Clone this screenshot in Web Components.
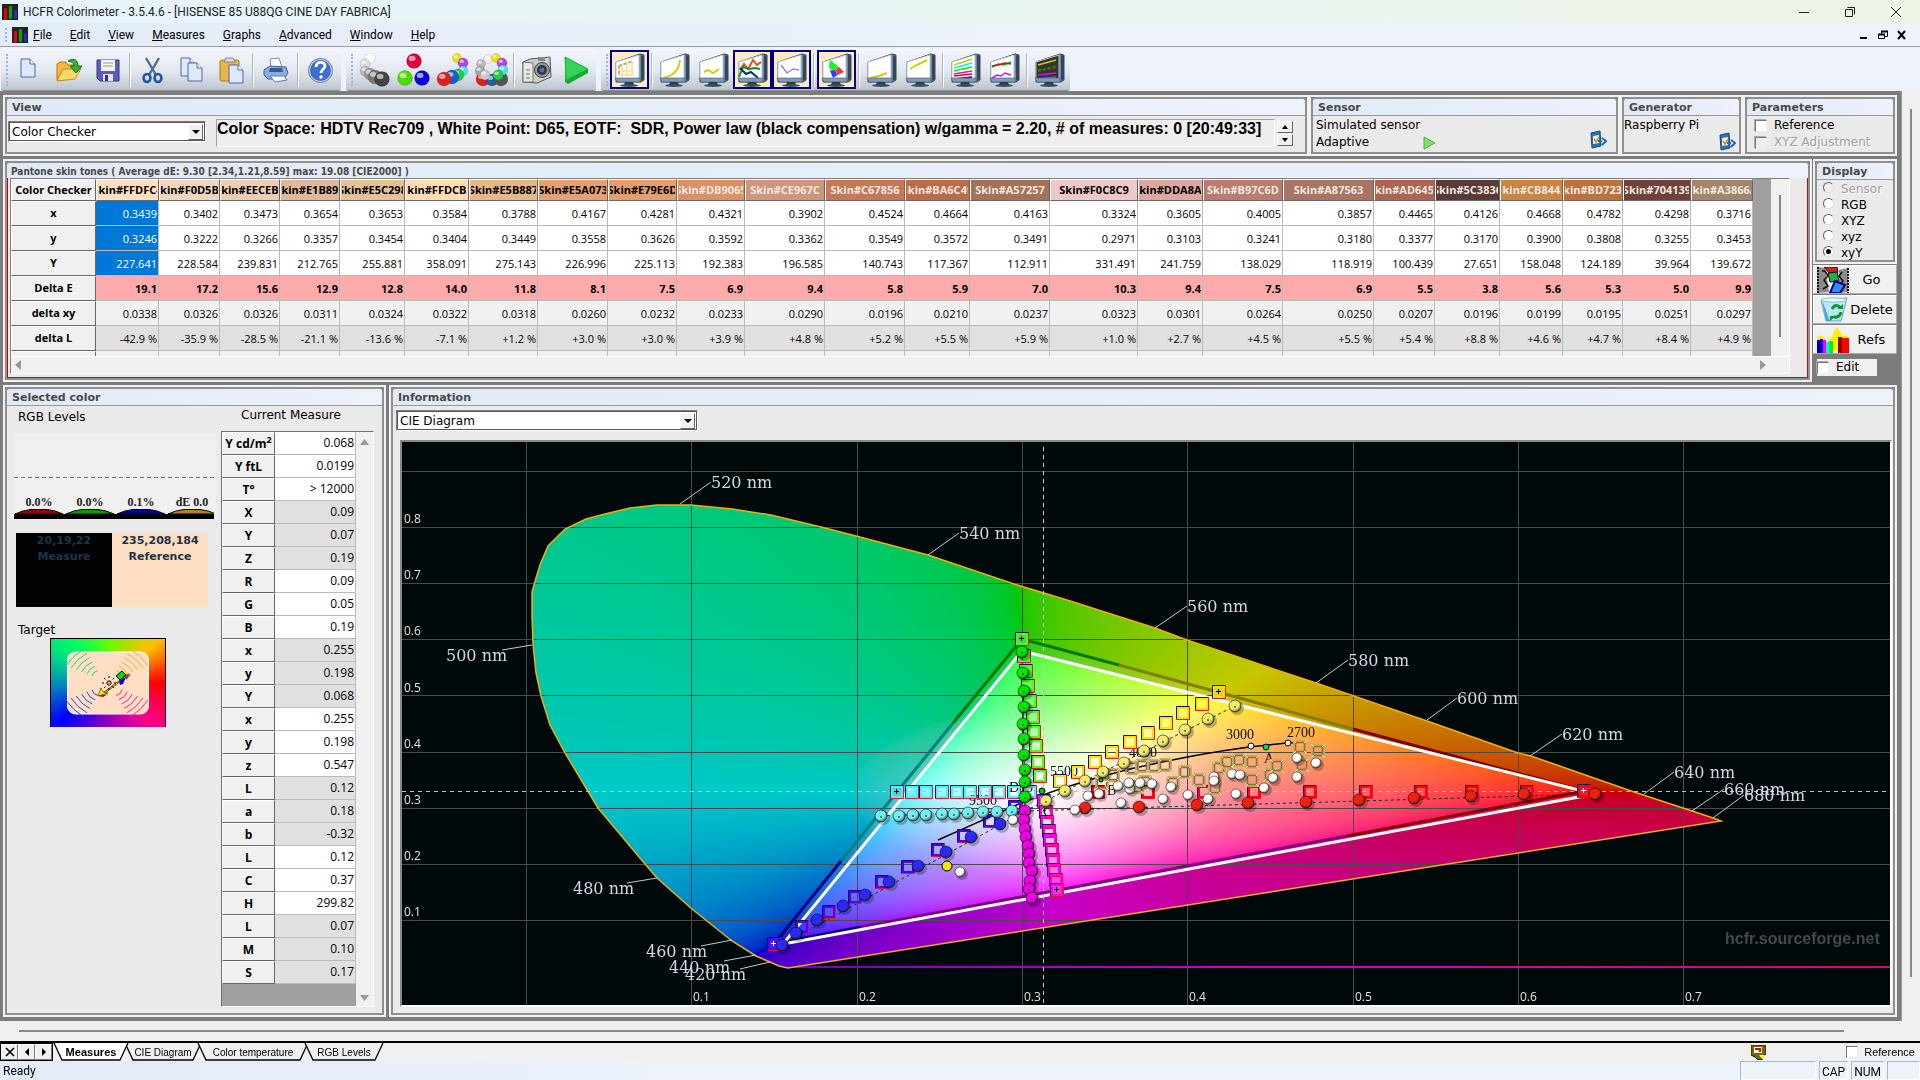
<!DOCTYPE html>
<html lang="en">
<head>
<meta charset="utf-8">
<title>HCFR Colorimeter</title>
<style>
html,body{margin:0;height:100%}
body{--ui:"Open Sans","Noto Sans",sans-serif;--menu:Roboto,"Open Sans",sans-serif;--label:"DejaVu Sans",sans-serif;--arial:"Liberation Sans",sans-serif;font:12px var(--ui);color:#000;background:#f0f0f0;overflow:hidden}
</style>
</head>
<body>
<hcfr-app></hcfr-app>
<script>
const define=(name,css,html,setup)=>{
  const t=document.createElement('template');
  t.innerHTML='<style>*{box-sizing:border-box}'+css+'</style>'+(typeof html==='string'?html:'');
  customElements.define(name,class extends HTMLElement{
    connectedCallback(){
      if(this.shadowRoot)return;
      const r=this.attachShadow({mode:'open'});
      r.append(t.content.cloneNode(true));
      if(typeof html==='function')r.innerHTML+=html(this);
      if(setup)setup(this,r);
    }
  });
};
const svg=(w,h,body)=>`<svg width="${w}" height="${h}" viewBox="0 0 ${w} ${h}" aria-hidden="true">${body}</svg>`;

/* ---------- icons ---------- */
const ball=(x,y,r,c)=>`<circle cx="${x}" cy="${y}" r="${r}" fill="${c}" stroke="#0003" stroke-width=".6"/><ellipse cx="${x-r*.25}" cy="${y-r*.35}" rx="${r*.45}" ry="${r*.35}" fill="#fff" opacity=".6"/>`;
const logo=svg(16,16,'<rect width="16" height="16" fill="#222"/><rect x="2" y="4" width="3" height="12" rx="1" fill="#e00"/><rect x="7" y="2" width="3" height="13" rx="1" fill="#0a0"/><rect x="12" y="6" width="3" height="9" rx="1" fill="#22e"/>');
const page=(x,y)=>`<path d="M${x} ${y}h9l5 5v13h-14z" fill="#dfe9fc" stroke="#4a66b0"/><path d="M${x+9} ${y}v5h5" fill="#fff" stroke="#4a66b0"/>`;
const screens={
  table:['#fff','<path d="M5 13l14-5M5 18h16M5 22h16M9 11v13M14 9v14M19 8v15" stroke="#ffe2a4" stroke-width="2"/><path d="M6 13l14-5M6 13v10" stroke="#b4ab9a" stroke-width="2" stroke-dasharray="3 2"/>'],
  gamma:['#fff','<path d="M5 25c10-2 16-8 17-18" stroke="#d2cf00" stroke-width="2" fill="none"/>'],
  wave:['#fff','<path d="M7 19l4-2 5 3 6-4" stroke="#d2cf00" stroke-width="2" fill="none"/>'],
  rgb:['#fff','<path d="M4 17l4-6 4 5 5-9 4 5 4-3" stroke="#e05020" stroke-width="2" fill="none"/><path d="M3 24l4-10 6 2 6-1 5 1" stroke="#12901a" stroke-width="2" fill="none"/><path d="M4 15l6 6 5-2 7 6" stroke="#00308a" stroke-width="2" fill="none"/>'],
  temp:['#fff','<path d="M6 12l6 8 6-4 6 1" stroke="#9088e0" stroke-width="1.5" fill="none"/>'],
  cie:['#fff','<path d="M10 7l-1 9 5 9 10-6z" fill="#7df"/><path d="M10 7l-1 7 5 4 5-4z" fill="#2e2"/><path d="M16 17l3-3 5 5-7 3z" fill="#f33"/><path d="M10 18l3 7 4-3-2-5z" fill="#43f"/>'],
  low:['#fff','<path d="M5 25l9-2 8-3" stroke="#d2cf00" stroke-width="2" fill="none"/>'],
  mid:['#fff','<path d="M6 16l7-4 10-5" stroke="#d2cf00" stroke-width="2" fill="none"/>'],
  lines:['#fff','<g fill="none" stroke-width="1.5"><path d="M5 12l18-6" stroke="#cc0"/><path d="M5 15l18-5" stroke="#0ef"/><path d="M5 18l18-4" stroke="#0e0"/><path d="M5 21l18-3" stroke="#e0e"/><path d="M5 23l18-2" stroke="#e00"/><path d="M5 26l18-2" stroke="#00e"/></g>'],
  pair:['#fff','<g fill="none" stroke-width="1.5"><path d="M4 14l6-3 6 1 7-3" stroke="#0b0"/><path d="M4 13l6-1 7-2 6 1" stroke="#e02"/><path d="M4 25l5-3 4 1 4-3 6 2" stroke="#e0e"/></g>'],
  dark:['#333','<g fill="none" stroke-width="1.5"><path d="M5 12l18-5" stroke="#cc0"/><path d="M5 17l18-2" stroke="#c20" stroke-dasharray="3 2"/><path d="M5 18l18-5" stroke="#0a0" stroke-dasharray="3 2"/><path d="M5 22l18-2" stroke="#e0e"/><path d="M5 26l18-2" stroke="#76e"/></g>']
};
const monitor=k=>svg(33,34,`<path d="M3 9L27 1l4 1v25l-3 2H3z" fill="#6f87a0" stroke="#34485e"/><path d="M28 2l3 1v23l-3 2z" fill="#33465c"/><path d="M3 9L26 2v24H3z" fill="${screens[k][0]}" stroke="#b8c4d2"/>${screens[k][1]}<path d="M2 25h25v4H4z" fill="#7e9cbe" stroke="#3f5772" stroke-width=".6"/><path d="M12 29h8l1 3H11z" fill="#2e3c4a"/><ellipse cx="16" cy="32.5" rx="9" ry="1.4" fill="#3f4c5a"/>`);
const icons={
  new:svg(33,34,page(8,6)),
  open:svg(33,34,'<path d="M5 27V11l3-2h6l2 3h9v5" fill="#f4b73c" stroke="#b87714"/><path d="M5 28l6-12h18l-6 10z" fill="#ffd968" stroke="#c48b16"/><path d="M16 8c7-4 10 0 10 5h4l-6 7-6-7h4c0-3-2-4-6-5z" fill="#35b437" stroke="#126b16"/>'),
  save:svg(33,34,'<path d="M6 7h22v21H9l-3-3z" fill="#5b5ac0" stroke="#34348a"/><rect x="10" y="7" width="14" height="11" fill="#f4f4f8"/><path d="M12 10h10M12 13h10" stroke="#999"/><rect x="12" y="21" width="10" height="7" fill="#e6e6ee"/><rect x="14" y="22" width="3" height="6" fill="#33337d"/>'),
  cut:svg(33,34,'<path d="M10 5l10 17M23 5L13 22" stroke="#4f6d96" stroke-width="2.4"/><ellipse cx="11" cy="25" rx="3.4" ry="4" fill="none" stroke="#1c55a8" stroke-width="2.6"/><ellipse cx="22" cy="25" rx="3.4" ry="4" fill="none" stroke="#1c55a8" stroke-width="2.6"/>'),
  copy:svg(33,34,page(6,5)+page(13,10)),
  paste:svg(33,34,'<rect x="6" y="7" width="19" height="21" rx="2" fill="#e8b648" stroke="#a87a1c"/><path d="M10 9l2-4h7l2 4z" fill="#ddd" stroke="#888"/>'+page(15,12)),
  print:svg(33,34,'<path d="M11 6l9-1 3 9H12z" fill="#fff" stroke="#88a"/><path d="M5 17l6-4 16 1 2 6-4 6H9l-4-4z" fill="#86aede" stroke="#3d659c"/><path d="M11 15h12l1 4H10z" fill="#345a90"/><path d="M11 23h14l3 4-12 2z" fill="#fff" stroke="#4f7fc4"/>'),
  help:svg(33,34,'<circle cx="16.5" cy="17.5" r="11.5" fill="#3e6fd0" stroke="#c9d2e2" stroke-width="2"/><circle cx="16.5" cy="17.5" r="12" fill="none" stroke="#6a83b4"/><path d="M12 14c0-6 9-6 9-1 0 3-4 3-4 7" stroke="#fff" stroke-width="2.8" fill="none"/><circle cx="17" cy="24" r="1.7" fill="#fff"/>'),
  grays:svg(33,34,ball(12,5,5,'#fff')+ball(7,11,5,'#ddd')+ball(7,18,5,'#bbb')+ball(12,21,6,'#999')+ball(17,24,7,'#777')+ball(24,26,7.5,'#444')),
  primaries:svg(33,34,ball(17,8,7.5,'#e0003c')+ball(8,25,7.5,'#4ddc00')+ball(25,25,7.5,'#0a00dc')),
  satur:svg(33,34,ball(21,5,4.5,'#f0e000')+ball(27,10,5,'#b040f0')+ball(27,18,5,'#50e0e0')+ball(22,22,6,'#20d040')+ball(16,24,7,'#1060d0')+ball(8,26,7,'#e02020')),
  checker:svg(33,34,ball(8,26,7,'#e02020')+ball(17,27,6,'#2060a0')+ball(26,26,7,'#555')+ball(13,6,4.5,'#eee')+ball(21,5,4.5,'#f0e000')+ball(27,10,5,'#b040f0')+ball(28,17,5,'#50e0e0')+ball(6,11,4.5,'#bbb')+ball(5,18,5,'#aaa')+ball(23,22,5,'#20d040')+ball(10,22,5,'#ccc')),
  camera:svg(33,34,'<path d="M3 9l7-3 20-2 1 20-14 6L3 29z" fill="#ccc" stroke="#555"/><path d="M3 9l10 1v19L3 29z" fill="#e8e8e8" stroke="#777"/><path d="M18 4h7v4h-7z" fill="#888"/><circle cx="22" cy="17" r="7.5" fill="#999" stroke="#444"/><circle cx="22" cy="17" r="5" fill="#333"/><circle cx="22" cy="17" r="2.5" fill="#3978c8"/><path d="M6 17h4M6 21h4M6 25h4" stroke="#777"/>'),
  play:svg(33,34,'<path d="M6 4l23 12v4L9 31l-3-2z" fill="#18a838"/><path d="M6 4l23 12L7 27z" fill="#35d458" stroke="#1fb040"/>')
};
const cfgIcon=svg(18,20,'<path d="M2 3l9-2 1 15-9 2z" fill="#2c70b8" stroke="#194878"/><path d="M4 6l6-1v8l-6 1z" fill="#e8f2ff"/><path d="M5 9l2 3 3-5" stroke="#d09020" stroke-width="1.5" fill="none"/><path d="M9 11h4M13 8l4 3-4 4" stroke="#2767b0" stroke-width="2" fill="none"/>');

/* ---------- window chrome ---------- */
define('title-bar',`:host{display:flex;align-items:center;gap:5px;height:23px;padding:0 1px 0 2px;background:linear-gradient(90deg,#e6f3fa,#e9f5f3 50%,#eef4e6)}
h1{margin:0;font:12px var(--menu);flex:1;color:#222}
button{border:0;background:none;width:46px;height:22px;padding:0;display:grid;place-items:center}`,
`${logo}<h1>HCFR Colorimeter - 3.5.4.6 - [HISENSE 85 U88QG CINE DAY FABRICA]</h1>
<div style="display:flex"><button aria-label="Minimize">${svg(12,12,'<path d="M1 6.5h10" stroke="#222"/>')}</button><button aria-label="Restore">${svg(12,12,'<path d="M1.5 3.5h7v7h-7zM3.5 1.5h7v7" fill="none" stroke="#222"/>')}</button><button aria-label="Close">${svg(12,12,'<path d="M1 1l10 10M11 1L1 11" stroke="#222"/>')}</button></div>`);

define('menu-bar',`:host{display:flex;align-items:center;height:24px;padding:0 10px 0 5px;background:linear-gradient(90deg,#e3ebf8,#eef3fb 60%);border-bottom:1px solid #9a9a9a}
.grip{width:2px;height:14px;border-left:2px dotted #9fb6d4;margin-right:5px}
nav{display:flex;gap:18px;flex:1;padding-left:5px}button{border:0;background:none;padding:0;font:12px var(--menu)}
.mdi{display:flex;gap:2px}.mdi button{width:17px;height:16px;display:grid;place-items:center}`,
()=>`<span class="grip"></span>${logo}<nav>${['File','Edit','View','Measures','Graphs','Advanced','Window','Help'].map(w=>`<button><u>${w[0]}</u>${w.slice(1)}</button>`).join('')}</nav>
<div class="mdi"><button aria-label="Minimize document">${svg(10,10,'<path d="M1 8h7" stroke="#000" stroke-width="2"/>')}</button><button aria-label="Restore document">${svg(10,10,'<path d="M.5 4.5h6v4h-6zM3.5 4V1.5h6v5H7" fill="none" stroke="#000"/><path d="M0 4.5h7M3 1.5h7" stroke="#000" stroke-width="2"/>')}</button><button aria-label="Close document">${svg(10,10,'<path d="M1 1l7 8M8 1L1 9" stroke="#000" stroke-width="2"/>')}</button></div>`);

define('tool-button',`:host{display:block}button{width:39px;height:39px;padding:0;border:2px solid transparent;background:none;display:grid;place-items:center}
:host([on]) button{background:#ffeac2;border-color:#00008a}`,
el=>{const k=el.getAttribute('icon');return `<button aria-label="${k}">${icons[k]||monitor(k)}</button>`});

define('tool-group',`:host{display:flex;align-items:center;height:42px;padding:2px 1px 2px 5px;background:linear-gradient(#f3f6fb,#e3e8f0 55%,#bfc5cd);border-radius:3px;border-bottom:1px solid #8a8f96}
.grip{width:2px;height:32px;border-left:2px dotted #9fb6d4;margin-right:2px}
::slotted(hr){width:2px;height:34px;margin:0 2px;border:0;border-left:1px solid #b0b6be;border-right:1px solid #fff}`,
`<span class="grip"></span><slot></slot>`);

define('tool-bar',`:host{display:flex;gap:5px;height:44px;padding:2px 1px 0;background:#eef3fb}`,
()=>{const g=s=>`<tool-group>${s.split(' ').map(k=>k==='|'?'<hr>':`<tool-button icon="${k.replace('*','')}"${k.includes('*')?' on':''}></tool-button>`).join('')}</tool-group>`;
return g('new open save | cut copy paste | print | help')+g('grays primaries satur checker | camera play')+g('table* | gamma wave rgb* temp* | cie* | low mid | lines pair | dark')});

/* ---------- shared parts ---------- */
define('hc-panel',`:host{display:flex;flex-direction:column;border:2px solid #f2f2f2;background:#808080;min-width:0;min-height:0}
.f{flex:1;display:flex;flex-direction:column;border:2px solid #909090;border-radius:5px 5px 0 0;background:#eaeaea;min-width:0;min-height:0;overflow:hidden}
h2{margin:0;height:17px;padding-left:5px;font:bold 11px/17px var(--label);color:#484848;background:linear-gradient(90deg,#e0eaf6,#edf2fb);border-bottom:1px solid #999;white-space:pre}
:host([slim]) h2{height:15px;font:bold 10px/17px "DejaVu Sans Condensed","DejaVu Sans",sans-serif;padding-left:4px;border:0}
.b{flex:1;display:flex;min-height:0;min-width:0}:host([slim]) .b{border:1px solid #d80000;border-top:0}`,
el=>`<div class="f"><h2>${el.getAttribute('heading')}</h2><div class="b"><slot></slot></div></div>`);

define('hc-select',`:host{display:grid;height:21px;font:12px var(--label);border:1px solid #808080;border-right-color:#fff;border-bottom-color:#fff}
select{grid-area:1/1;appearance:none;width:100%;border:1px solid #555;border-radius:0;background:#fff;font:inherit;padding:0 2px;color:#000}
i{grid-area:1/1;justify-self:end;align-self:center;width:15px;height:16px;margin-right:2px;background:#f0f0f0;border:1px solid;border-color:#fff #666 #666 #fff;display:grid;place-items:center;pointer-events:none}
i::after{content:"";border:4px solid transparent;border-top-color:#000;border-bottom:0}`,
el=>`<select aria-label="${el.getAttribute('label')}"><option>${el.getAttribute('value')}</option></select><i></i>`);

define('hc-check',`:host{display:block;font:12px var(--label)}label{display:flex;align-items:center;gap:7px;line-height:15px}
input{appearance:none;margin:0;width:12px;height:12px;background:#fff;border:1px solid;border-color:#777 #eee #eee #777;box-shadow:-1px -1px 0 #aaa}
input:disabled{background:#eee}:host([disabled]) label{color:#a0a0a0;text-shadow:1px 1px 0 #fff}`,
el=>`<label><input type="checkbox"${el.hasAttribute('disabled')?' disabled':''}>${el.getAttribute('label')}</label>`);

/* ---------- top row ---------- */
define('view-info',`:host{flex:1;display:flex;padding:3px 12px 0 1px;gap:10px;align-items:flex-start;min-width:0}
hc-select{width:198px;margin-top:2px}
.t{flex:1;height:28px;border:1px solid #a0a0a0;border-right-color:#fff;border-bottom-color:#fff;background:#eee;font:bold 16px/17px var(--arial);white-space:pre;overflow:hidden}
.s{display:grid;gap:1px;margin-top:2px;margin-left:-8px}.s button{width:16px;height:12px;padding:0;background:#f0f0f0;border:1px solid;border-color:#fff #666 #666 #fff;display:grid;place-items:center}`,
`<hc-select label="View" value="Color Checker"></hc-select><div class="t">Color Space: HDTV Rec709 , White Point: D65, EOTF:  SDR, Power law (black compensation) w/gamma = 2.20, # of measures: 0 [20:49:33]</div><div class="s"><button aria-label="Up">${svg(6,4,'<path d="M0 4h6L3 0z"/>')}</button><button aria-label="Down">${svg(6,4,'<path d="M0 0h6L3 4z"/>')}</button></div>`);

define('device-info',`:host{flex:1;display:flex;font:12px/17px var(--label);padding:1px 3px 0 0}
:host([mode]){padding:1px 9px 0 3px}
.l{flex:1}.r{display:flex;align-items:center;gap:54px}p{margin:0}button{align-self:flex-end;border:0;background:none;padding:0;height:20px}:host([mode]) button{margin-bottom:2px}`,
el=>`<div class="l"><p>${el.getAttribute('name')}</p>${el.hasAttribute('mode')?`<p class="r">${el.getAttribute('mode')} ${svg(12,14,'<path d="M1 1l11 6-11 6z" fill="#80e060" stroke="#4cb040"/>')}</p>`:''}</div><button aria-label="Configure">${cfgIcon}</button>`);

/* ---------- colour checker grid ---------- */
const grid={
 w:[63,61,60,60,65,64,69,70,69,68,80,80,65,80,88,65,80,91,61,65,63,60,68,62],
 c:'FFDFC4 F0D5BE EECEB3 E1B899 E5C298 FFDCB2 E5B887 E5A073 E79E6D DB9065 CE967C C67856 BA6C49 A57257 F0C8C9 DDA8A0 B97C6D A87563 AD6452 5C3836 CB8442 BD723C 704139 A3866A'.split(' '),
 x:'0.3439 0.3402 0.3473 0.3654 0.3653 0.3584 0.3788 0.4167 0.4281 0.4321 0.3902 0.4524 0.4664 0.4163 0.3324 0.3605 0.4005 0.3857 0.4465 0.4126 0.4668 0.4782 0.4298 0.3716',
 y:'0.3246 0.3222 0.3266 0.3357 0.3454 0.3404 0.3449 0.3558 0.3626 0.3592 0.3362 0.3549 0.3572 0.3491 0.2971 0.3103 0.3241 0.3180 0.3377 0.3170 0.3900 0.3808 0.3255 0.3453',
 Y:'227.641 228.584 239.831 212.765 255.881 358.091 275.143 226.996 225.113 192.383 196.585 140.743 117.367 112.911 331.491 241.759 138.029 118.919 100.439 27.651 158.048 124.189 39.964 139.672',
 'Delta E':'19.1 17.2 15.6 12.9 12.8 14.0 11.8 8.1 7.5 6.9 9.4 5.8 5.9 7.0 10.3 9.4 7.5 6.9 5.5 3.8 5.6 5.3 5.0 9.9',
 'delta xy':'0.0338 0.0326 0.0326 0.0311 0.0324 0.0322 0.0318 0.0260 0.0232 0.0233 0.0290 0.0196 0.0210 0.0237 0.0323 0.0301 0.0264 0.0250 0.0207 0.0196 0.0199 0.0195 0.0251 0.0297',
 'delta L':'-42.9 -35.9 -28.5 -21.1 -13.6 -7.1 +1.2 +3.0 +3.0 +3.9 +4.8 +5.2 +5.5 +5.9 +1.0 +2.7 +4.5 +5.5 +5.4 +8.8 +4.6 +4.7 +8.4 +4.9'
};
define('checker-grid',`:host{flex:1;display:flex;flex-direction:column;margin:0 17px 3px 2px;min-width:0;border:1px solid #808080;border-right-color:#fff;border-bottom-color:#fff;background:#f0f0f0}
.top{flex:1;display:flex;min-height:0;overflow:hidden}.v{flex:1;background:#a0a0a0;overflow:hidden}
.sb{width:18px;background:#f0f0f0;display:flex;justify-content:center;padding:16px 0 19px}.sb::after{content:"";width:2px;background:#858585}
.h{height:17px;display:flex;justify-content:space-between;align-items:center;padding:0 23px 0 4px;border-top:1px solid #fff}
table{border-collapse:separate;border-spacing:0;table-layout:fixed;width:0;font:11px var(--ui)}
tr{height:25px}thead tr{height:22px}
th,td{padding:0 1px;border-right:1px solid #bbb;border-bottom:1px solid #bbb;overflow:hidden;white-space:nowrap}
th{font-weight:bold;background:#f0f0f0;border-color:#666;border-top:1px solid #fff;border-left:1px solid #fff}
thead th{padding-bottom:2px}tbody th{padding-bottom:2px}
td{text-align:right;background:#fff}
th span{display:flex;justify-content:center;overflow:hidden}
td.sel{background:#0078d7;color:#fff}.Delta td{background:#ffabab;font-weight:bold}.xy td{background:#f0f0f0}.L td{background:#e0e0e0}.e td{background:#f0f0f0}`,
()=>{
 const rows=['x','y','Y','Delta E','delta xy','delta L'];
 return `<div class="top"><div class="v"><table><colgroup><col style="width:85px">${grid.w.map(w=>`<col style="width:${w}px">`).join('')}</colgroup>
<thead><tr><th>Color Checker</th>${grid.c.map((c,i)=>`<th style="background:#${c};color:${(i<9||i===14||i===15)?'#000':'#f0e8e0'}"><span>Skin#${c}</span></th>`).join('')}</tr></thead><tbody>
${rows.map((k,r)=>`<tr class="${['','','','Delta','xy','L'][r]}"><th>${k}</th>${grid[k].split(' ').map((v,i)=>`<td${r<3&&i===0?' class="sel"':''}>${v}${r===5?' %':''}</td>`).join('')}</tr>`).join('')}
<tr class="e"><th></th>${grid.c.map(()=>'<td></td>').join('')}</tr></tbody></table></div><div class="sb"></div></div>
<div class="h">${svg(6,10,'<path d="M6 0v10L0 5z" fill="#999"/>')}${svg(6,10,'<path d="M0 0v10l6-5z" fill="#999"/>')}</div>`});

define('display-modes',`:host{flex:1;display:flex;flex-direction:column;font:12px/16px var(--label);padding:1px 2px 0 6px}
label{display:flex;gap:7px;align-items:center}label.d{color:#a0a0a0;text-shadow:1px 1px 0 #fff}
input{appearance:none;margin:0 0 4px;width:11px;height:11px;border-radius:50%;background:#fff;border:1px solid;border-color:#666 #ddd #ddd #666;display:grid;place-items:center}
input:checked::after{content:"";width:5px;height:5px;border-radius:50%;background:#000}input:disabled{background:#eee}`,
`<label class="d"><input type="radio" name="m" disabled>Sensor</label><label><input type="radio" name="m">RGB</label><label><input type="radio" name="m">XYZ</label><label><input type="radio" name="m">xyz</label><label><input type="radio" name="m" checked>xyY</label>`);

const sideIcons={
 Go:svg(32,26,'<path d="M0 0l8 1 4 24-12 1zM22 3l9-2v24l-8 1z" fill="#8b8b8b"/><path d="M1 0v26M31 1v25" stroke="#111" stroke-width="2" stroke-dasharray="2 1"/><path d="M5 4h3l3 5-4 4 4 6-5 3M25 5l-3 4 4 5-4 5 3 5" fill="none" stroke="#111" stroke-width="1.5"/><path d="M7 0h13l1 5-8 2z" fill="#d02030" stroke="#400"/><path d="M11 6l9-1 2 9-9 1z" fill="#20b040" stroke="#111"/><path d="M18 14l10 4-5 8H13z" fill="#2a90f0" stroke="#00008a" stroke-width="2"/>'),
 Delete:svg(32,26,'<path d="M4 3l26-2-6 23H9z" fill="#bfe6f6" stroke="#5aaad0"/><path d="M5 3l8 21H9z" fill="#4aa8dc"/><ellipse cx="17" cy="3" rx="13" ry="2" fill="#e8f8ff" stroke="#7cc"/><path d="M15 12c3-6 8-3 8 0M24 15c-1 6-7 6-8 4" fill="none" stroke="#0a9a30" stroke-width="3"/><path d="M20 12h6v-5zM19 19h-6v5z" fill="#0a9a30"/>'),
 Refs:svg(32,26,'<path d="M0 26V12l3-4 3 2 4 4 5-4 2-5 3-5 3 5 3 4 3-1 3 4v10z" fill="#fe0"/><path d="M0 13h3v13H0z" fill="#008"/><path d="M3 12h3v14H3z" fill="#00f"/><path d="M6 13h3v13H6z" fill="#f0f"/><path d="M9 15h3v11H9z" fill="#0ef"/><path d="M12 14h4v12h-4z" fill="#0e0"/><path d="M21 10h4v16h-4z" fill="#800"/><path d="M25 11h7v15h-7z" fill="#f00"/>')
};
define('side-button',`:host{display:block}button{width:100%;height:29px;padding:0 2px 0 3px;display:flex;align-items:center;background:#f0f0f0;border:1px solid;border-color:#fff #aaa #aaa #fff;font:13px var(--label)}span{flex:1}`,
el=>{const k=el.getAttribute('label');return `<button>${sideIcons[k]}<span>${k}</span></button>`});

/* ---------- selected colour ---------- */
const measures=[['Y cd/m<sup>2</sup>','0.068'],['Y ftL','0.0199'],['T°','&gt; 12000'],['X','0.09'],['Y','0.07'],['Z','0.19'],['R','0.09'],['G','0.05'],['B','0.19'],['x','0.255'],['y','0.198'],['Y','0.068'],['x','0.255'],['y','0.198'],['z','0.547'],['L','0.12'],['a','0.18'],['b','-0.32'],['L','0.12'],['C','0.37'],['H','299.82'],['L','0.07'],['M','0.10'],['S','0.17']];
define('measure-grid',`:host{flex:1;display:flex;border:1px solid #707070;border-right-color:#fff;border-bottom-color:#fff;min-height:0}
.v{flex:1;background:#a0a0a0;overflow:hidden}.s{width:17px;background:#f0f0f0;display:flex;flex-direction:column;justify-content:space-between;align-items:center;padding:7px 0 5px}
table{border-collapse:separate;border-spacing:0;table-layout:fixed;width:100%;font:12px var(--ui)}tr{height:23px}
th,td{padding:0 1px;border-bottom:1px solid #bbb;border-right:1px solid #bbb;line-height:18px}
th{width:53px;background:#f0f0f0;border-color:#666;border-top:1px solid #fff;border-left:1px solid #fff;line-height:16px;white-space:nowrap}
td{background:#fff;text-align:right}.g td{background:#e0e0e0}sup{font-size:9px;line-height:0}`,
()=>`<div class="v"><table>${measures.map((m,i)=>`<tr${Math.floor(i/3)%2?' class="g"':''}><th scope="row">${m[0]}</th><td>${m[1]}</td></tr>`).join('')}</table></div><div class="s">${svg(9,6,'<path d="M0 6h9L4.5 0z" fill="#999"/>')}${svg(9,6,'<path d="M0 0h9L4.5 6z" fill="#999"/>')}</div>`);

define('rgb-levels',`:host{display:block;height:86px;background:#f0f0f0}svg{display:block}text{font:bold 12px "Liberation Serif",serif;text-anchor:middle;fill:#222}`,
()=>svg(200,86,'<path d="M0 44.5h200" stroke="#777" stroke-dasharray="4 3"/><path d="M0 83.5h200" stroke="#000" stroke-width="5"/>'+[['0.0%',25,'#a00000'],['0.0%',76,'#00a000'],['0.1%',127,'#0000a0'],['dE 0.0',178,'#b8860b']].map(([t,x,c])=>`<path d="M${x-24} 81l8-3 8-1.5h16l8 1.5 8 3z" fill="${c}" stroke="#000"/><text x="${x}" y="73">${t}</text>`).join('')));

define('color-pair',`:host{display:flex;height:74px;width:192px;font:bold 11px/16px var(--label);color:#1c3448;text-align:center}
div{flex:1;background:#030305}div+div{background:#ffdfc4}`,
`<div>20,19,22<br>Measure</div><div>235,208,184<br>Reference</div>`);

define('target-view',`:host{display:block;width:116px;height:89px;border:1px solid #000;border-bottom:0;background:conic-gradient(from 0deg,#5cff00,#ffc000 50deg,#ff4000 75deg,#ff0000 90deg,#ff0080 128deg,#b000b0 165deg,#6000d0 200deg,#0000ff 232deg,#0080c0 265deg,#00e080 300deg,#00ff60 320deg,#5cff00)}svg{display:block}`,
()=>{const arcs=(sx,sy,c)=>[12,16,20,24,28,32].map((d,i)=>{const w=4+i*1.6,cx=56+sx*d,cy=44+sy*d*.8;return `<path d="M${cx-sx*w*.75} ${cy+sy*w*.7}Q${cx+sx*2} ${cy+sy*2} ${cx+sx*w*.75} ${cy-sy*w*.7}" fill="none" stroke="${c}"/>`}).join('');
return svg(114,88,`<rect x="16.5" y="13" width="81" height="62" rx="8" fill="#ffdfc4" stroke="#fff"/>${arcs(-1,-1,'#28d080')}${arcs(1,-1,'#f0b020')}${arcs(-1,1,'#2050e0')}${arcs(1,1,'#ff2090')}<path d="M78 35L49 57" stroke="#3a2a00" stroke-width="2"/><path d="M78 35L49 57" stroke="#f0c000"/><path d="M47 57l3-8 2 4 5 1z" fill="#fe0" stroke="#3a2a00" stroke-width=".6"/><path d="M65 37l6-5 4 4-6 5z" fill="#00e000" stroke="#000"/><path d="M68 42l7-4-3 7-3 1z" fill="#0000e0"/><path d="M74 37l6-2-5 6z" fill="#c02000"/><path d="M48 57l9-2-5 3z" fill="#901000"/><path d="M51 44h14M58 37v14M53 39l10 10M63 39L53 49" stroke="#000" stroke-dasharray="2 2"/>`)});

define('selected-color',`:host{flex:1;display:flex;min-width:0;min-height:0;font:12px/16px var(--label)}
.l{width:209px;padding:3px 0 0 7px;display:flex;flex-direction:column}.r{flex:1;display:flex;flex-direction:column;padding:1px 8px 6px 5px;min-height:0}
h3{margin:0;font:inherit}.l h3{padding-left:4px}.r h3{padding-left:20px;margin-bottom:8px}
rgb-levels{margin-top:8px;overflow:hidden}color-pair{margin:14px 0 15px 2px}target-view{margin-left:36px}`,
`<div class="l"><h3>RGB Levels</h3><rgb-levels></rgb-levels><color-pair></color-pair><h3>Target</h3><target-view></target-view></div><div class="r"><h3>Current Measure</h3><measure-grid></measure-grid></div>`);

/* ---------- CIE diagram ---------- */
const X0=402,Y0=442,W=1488,H=563;
const locus=[[788,968],[779,966],[770,962],[756,956],[732,941],[692,909],[657,878],[645,864],[598,808],[565,753],[550,725],[541,696],[536,673],[533,644],[532,617],[532,592],[536,578],[540,565],[548,546],[565,529],[586,519],[605,514],[630,508],[657,505],[691,505],[732,509],[771,515],[821,527],[856,536],[928,555],[1014,584],[1067,600],[1155,628],[1187,640],[1316,683],[1380,705],[1427,721],[1518,753],[1531,756],[1634,792],[1692,811],[1713,818],[1721,821]];
const rec709=[[1022,639],[1584,791],[774,944]];
const inner=[[1022,651],[1595,794],[783,944]];
/* chromaticity to display colour: out-of-gamut points are desaturated towards neutral */
const rgbAt=(px,py)=>{
  const x=(px-526.5)/1653,y=Math.max((976.5-py)/561,.001),X=x/y,Z=(1-x-y)/y;
  let c=[3.2406*X-1.5372-.4986*Z,-.9689*X+1.8758+.0415*Z,.0557*X-.204+1.057*Z];
  const lo=Math.min(...c,0);
  c=c.map(v=>v-lo);
  const m=Math.max(...c);
  return c.map(v=>Math.pow(v/m,1/2.2));
};
const P={
 green:{s:[[1022,639,1],[1024,656],[1026,671],[1028,686],[1030,701],[1033,717],[1034,732],[1036,746],[1038,762],[1040,776]],c:[[1022,652],[1023,673],[1024,691],[1024,707],[1023,724],[1024,739],[1024,755],[1025,770],[1025,782],[1025,797]]},
 cyan:{s:[[897,792,1],[912,792],[926,792],[942,792],[957,792],[970,792],[985,792],[999,792],[1014,792],[1030,792]],c:[[881,816],[899,816],[913,815],[926,815],[942,814],[954,814],[968,813],[983,812],[997,812],[1012,811]]},
 yellow:{s:[[1060,781],[1078,772],[1095,762],[1112,752],[1130,742],[1148,733],[1166,723],[1183,713],[1202,704],[1219,692,1]],c:[[1046,801],[1065,791],[1085,781],[1103,772],[1124,763],[1144,751],[1163,741],[1185,730],[1208,719],[1235,706]]},
 red:{s:[[1098,792],[1148,792],[1204,792],[1254,792],[1310,792],[1366,792],[1421,792],[1472,792],[1527,792],[1584,791,1]],c:[[1085,808],[1139,807],[1197,805],[1248,803],[1306,802],[1359,800],[1414,798],[1471,796],[1524,794],[1595,794]]},
 blue:{s:[[774,944,1],[802,927],[829,912],[855,897],[882,882],[908,867],[938,850],[964,836],[990,821],[1015,807]],c:[[782,945],[796,933],[817,920],[843,906],[865,895],[889,882],[918,866],[946,852],[971,837],[1000,824]]},
 magenta:{s:[[1044,801],[1046,812],[1047,822],[1049,831],[1050,840],[1052,850],[1053,860],[1054,870],[1056,880],[1057,890,1]],c:[[1025,811],[1024,820],[1025,829],[1026,837],[1028,846],[1029,854],[1029,863],[1032,871],[1030,881],[1029,889],[1032,898]]}
};
const sq={green:'#4dff00',cyan:'#4cf0ff',yellow:'#ffe000',red:'#ff0010',blue:'#4a00ff',magenta:'#ff00e6'};
const plusFill={green:'#4fd84f',cyan:'#58d0d0',yellow:'#d8d040',red:'#e02030',blue:'#4a20e0',magenta:'#e040d0'};
const refs=[[1102,783],[1113,775],[1132,768],[1142,766],[1154,766],[1165,765],[1185,772],[1173,783],[1199,780],[1219,768],[1227,762],[1239,760],[1252,762],[1270,775],[1277,766],[1252,780],[1215,788],[1300,747],[1318,751],[1302,765],[1145,782],[1137,787]];
const whites=[[1013,820],[1088,796],[1099,794],[1075,810],[1118,786],[1130,789],[1129,783],[1140,783],[1152,784],[1171,787],[1163,799],[1188,795],[1208,799],[1214,777],[1214,781],[1232,774],[1240,775],[1236,794],[1264,788],[1273,778],[1297,758],[1297,777],[1316,763],[1121,803],[960,872]];
const nm=[[520,711,488,680,504],[540,959,539,928,555],[560,1187,612,1155,628],[580,1348,666,1316,683],[600,1457,704,1427,720],[620,1562,740,1530,756],[640,1674,778,1644,794],[660,1724,795,1692,811],[680,1744,801,1713,818],[500,446,661,532,645,502,650],[480,573,894,657,878,627,883],[460,646,957,732,940,701,946],[440,669,973,756,955,724,961],[420,685,980,770,962,740,969]];
define('cie-diagram',`:host{flex:1;display:grid;margin:9px 1px 6px 7px;border:2px solid;border-color:#888 #fff #fff #888;background:#00090a;min-height:0;overflow:hidden}
canvas,svg{grid-area:1/1;width:100%;height:100%;min-height:0;display:block}
.ax{font:12px var(--ui);fill:#e4e4e4}.nm{font:16px "DejaVu Serif",serif;fill:#d4d4e4}.k{font:14px "Liberation Serif",serif;fill:#101010}.wm{font:bold 16px var(--arial);fill:#484848}`,
()=>{
 const defs=Object.entries({green:'#00e800',cyan:'#70f0f0',yellow:'#f4ec70',red:'#f02010',blue:'#2a2af4',magenta:'#f000e8',white:'#fff'}).map(([k,c])=>`<radialGradient id="g-${k}" cx=".4" cy=".35" r=".75"><stop offset="0" stop-color="${c}"/><stop offset=".55" stop-color="${c}"/><stop offset="1" stop-color="#222"/></radialGradient>`).join('')+'<linearGradient id="base" gradientUnits="userSpaceOnUse" x1="788" y1="0" x2="1890" y2="0"><stop offset="0" stop-color="#7000c8"/><stop offset=".4" stop-color="#d000c0"/><stop offset="1" stop-color="#e0007c"/></linearGradient>';
 let o='';
 for(let i=0;i<9;i++)o+=`<path d="M402 ${Math.round(471+56.1*i)+.5}h1488"/>`;
 for(let i=0;i<8;i++)o+=`<path d="M${Math.round(526+165.3*i)+.5} 442v563"/>`;
 o=`<g stroke="#4a4a4a">${o}</g>`;
 o+=`<rect x="788" y="966" width="1102" height="2" fill="url(#base)"/>`;
 o+=`<polygon points="${locus.join(' ')}" fill="none" stroke="#f0b000" stroke-width="1.5"/>`;
 o+=`<g stroke-width="3" fill="none"><path d="M1022 639L953 723" stroke="#007a00"/><path d="M953 723L841 861" stroke="#008080"/><path d="M841 861L774 944L861 927" stroke="#000080"/><path d="M861 927L1347 836" stroke="#800080"/><path d="M1347 836L1584 791L1353 729" stroke="#800000"/><path d="M1353 729L1119 665" stroke="#808000"/><path d="M1119 665L1022 639" stroke="#007a00"/></g>`;
 o+=`<polygon points="${inner.join(' ')}" fill="none" stroke="#fff" stroke-width="3"/>`;
 o+=`<path d="M402 791.5h1488M1043.5 447v558" stroke="#c4c4c4" stroke-dasharray="4 4"/>`;
 o+=nm.map(([n,x,y,a,b,c,d])=>`<path d="M${a} ${b}L${c||x} ${d||y-6}" stroke="#c8c8d8"/><text class="nm" x="${x}" y="${y}">${n} nm</text>`).join('');
 for(let i=1;i<9;i++)o+=`<text class="ax" x="404" y="${Math.round(978-56.1*i-6)}">0.${i}</text>`;
 for(let i=1;i<8;i++)o+=`<text class="ax" x="${Math.round(528+165.3*i)}" y="1001">0.${i}</text>`;
 o+=`<g stroke="#222" stroke-dasharray="3 3" fill="none"><path d="M1025 811L1595 794M1025 811L1235 706M1025 811L782 945M881 816L1025 811"/><path d="M1022 652L1025 811L1032 898" stroke-dasharray="none"/></g>`;
 o+=`<path d="M938 840C965 828 990 817 1021 803C1060 788 1110 772 1167 761C1210 752 1250 745 1303 742" fill="none" stroke="#000" stroke-width="1.5"/>`;
 o+=[['9500',969,805],['5500',1050,776],['4000',1129,757],['3000',1226,739],['2700',1287,737],['D65',1009,792],['A',1264,763],['B',1107,795],['C',1043,816]].map(([t,x,y])=>`<text class="k" x="${x}" y="${y}">${t}</text>`).join('');
 const square=(x,y,k,p)=>`<rect x="${x-5}" y="${y-5}" width="10" height="10" fill="${p?plusFill[k]:'none'}" stroke="${sq[k]}" stroke-width="2"/><path d="M${x-6.5} ${y+6.5}v-13h13" fill="none" stroke="#10106a"/><path d="M${x-6.5} ${y+6.5}h13v-13" fill="none" stroke="#f01030"/>${p?`<path d="M${x-3} ${y-.5}h5M${x-.5} ${y-3}v5" stroke="${k==='red'||k==='blue'?'#fff':'#000'}"/>`:''}`;
 const dot=(x,y,k,r)=>`<ellipse cx="${x+2}" cy="${y+2}" rx="${r+1}" ry="${r+1}" fill="#000" opacity=".25"/><circle cx="${x}" cy="${y}" r="${r}" fill="url(#g-${k})" stroke="#000a" stroke-width=".8"/>${k==='blue'||k==='red'||k==='white'?'':`<path d="M${x} ${y}v2" stroke="#400"/>`}`;
 for(const k of ['cyan','blue','magenta','green','red'])o+=P[k].s.map(s=>square(s[0],s[1],k,s[2])).join('');
 o+=refs.map(([x,y])=>`<rect x="${x-6}" y="${y-6}" width="12" height="12" fill="none" stroke="#d8a860" stroke-width="2"/><rect x="${x-4.5}" y="${y-4.5}" width="9" height="9" fill="none" stroke="#7a7448" stroke-width="1.5"/><path d="M${x-7} ${y-7}l3 3M${x+7} ${y-7}l-3 3M${x-7} ${y+7}l3-3M${x+7} ${y+7}l-3-3" stroke="#ffe9b0"/>`).join('');
 o+=P.yellow.s.map(s=>square(s[0],s[1],'yellow',s[2])).join('');
 for(const k of ['cyan','blue','red','yellow'])o+=P[k].c.map(c=>dot(c[0],c[1],k,6)).join('');
 o+=whites.map(c=>dot(c[0],c[1],'white',5)).join('');
 for(const k of ['green','magenta'])o+=P[k].c.map(c=>dot(c[0],c[1],k,6)).join('');
 o+=`<g stroke="#000"><circle cx="947" cy="866" r="5" fill="#f4e800"/><circle cx="1251" cy="746" r="3" fill="#fff"/><circle cx="1288" cy="743" r="3" fill="#fff"/><circle cx="1266" cy="747" r="3" fill="#00e020"/><circle cx="1042" cy="791" r="3" fill="#00c020"/><circle cx="1101" cy="780" r="2" fill="#00c020"/></g>`;
 o+=`<text class="wm" x="1725" y="944">hcfr.sourceforge.net</text>`;
 return `<canvas width="${W}" height="${H}"></canvas><svg viewBox="${X0} ${Y0} ${W} ${H}" preserveAspectRatio="none" role="img" aria-label="CIE 1931 chromaticity diagram"><defs>${defs}</defs>${o}</svg>`;
},(el,root)=>{
 const ctx=root.querySelector('canvas').getContext('2d');
 const layer=(poly,level,glow,power)=>{
  const c=document.createElement('canvas');c.width=W;c.height=H;const g=c.getContext('2d'),im=g.createImageData(W,H);
  for(let y=0;y<H;y++)for(let x=0;x<W;x++){
   const px=x+X0,py=y+Y0,v=rgbAt(px,py),i=(y*W+x)*4;
   const d=Math.hypot((px-1043)/190,(py-792)/85),w=d<1?glow*Math.pow(1-d,power):0;
   for(let k=0;k<3;k++)im.data[i+k]=(v[k]+(1-v[k])*w)*level;
   im.data[i+3]=255;
  }
  g.putImageData(im,0,0);
  ctx.save();ctx.beginPath();poly.forEach(p=>ctx.lineTo(p[0]-X0,p[1]-Y0));ctx.closePath();ctx.clip();ctx.drawImage(c,0,0);ctx.restore();
 };
 layer(locus,200,.5,.5);layer(rec709,205,.5,.5);layer(inner,255,.6,1.1);
});

define('info-view',`:host{flex:1;display:flex;flex-direction:column;min-width:0;min-height:0}hc-select{width:302px;margin:4px 0 0 3px}`,
`<hc-select label="Information" value="CIE Diagram"></hc-select><cie-diagram></cie-diagram>`);

/* ---------- bottom ---------- */
define('tab-strip',`:host{display:flex;align-items:center;height:20px;border-top:2px solid #000;background:#f0f0f0;font:10px var(--arial)}
.n{display:flex;border:1px solid #000}.n button{width:17px;height:16px;padding:0;background:#f0f0f0;border:1px solid;border-color:#fff #777 #777 #fff;display:grid;place-items:center}
.tabs{display:flex;height:18px;flex:1}.tabs button{border:0;padding:0;background:none;display:grid;font:inherit;margin-right:-5px}
.tabs svg,.tabs span{grid-area:1/1}.tabs span{place-self:center}.tabs .a{font-weight:bold;font-size:11px;z-index:1}
.r{display:flex;align-items:center;gap:80px;padding-right:5px}label{display:flex;gap:6px;align-items:center;font:11px var(--arial)}input{appearance:none;margin:0;width:12px;height:12px;background:#fff;border:1px solid;border-color:#777 #eee #eee #777}`,
()=>{const tab=(t,w,a)=>`<button class="${a?'a':''}"><svg width="${w}" height="18" viewBox="0 0 ${w} 18"><path d="M1 0l8 17h${w-18}l8-17" fill="${a?'#fff':'#f0f0f0'}" stroke="#000" stroke-width="1.3"/></svg><span>${t}</span></button>`;
const b=(l,p)=>`<button aria-label="${l}">${svg(10,10,p)}</button>`;
return `<div class="n">${b('Close','<path d="M1 1l8 8M9 1L1 9" stroke="#000" stroke-width="1.6"/>')}${b('Previous','<path d="M7 1v8L3 5z"/>')}${b('Next','<path d="M3 1v8l4-4z"/>')}</div><div class="tabs">${tab('Measures',76,1)}${tab('CIE Diagram',78)}${tab('Color temperature',112)}${tab('RGB Levels',80)}</div>
<div class="r">${svg(15,15,'<path d="M0 0h15v9l-4 3v3H7l-3-3-4-2z" fill="#6e6e00" stroke="#111"/><rect x="3" y="2" width="8" height="6" fill="#fff"/><path d="M4 4h5v3" stroke="#e00" stroke-width="2" fill="none"/><path d="M8 10h6l-3 4z" fill="#ff0"/>')}<label><input type="checkbox">Reference</label></div>`});

define('status-bar',`:host{display:flex;align-items:stretch;height:19px;background:linear-gradient(90deg,#e3ebf8,#eef3fb 40%);font:12px/20px var(--menu);padding-left:3px;gap:3px}
.g{flex:1}.p{border:1px solid #a4b8d0;border-right-color:#fff;border-bottom-color:#fff;padding:0 2px}`,
`<span class="g">Ready</span><span class="p" style="width:76px"></span><span class="p">CAP</span><span class="p">NUM</span><span class="p" style="width:33px"></span>`);

define('hcfr-app',`:host{display:flex;flex-direction:column;height:100vh;overflow:hidden}
.ws{flex:1;display:grid;grid-template-columns:1fr 19px;grid-template-rows:1fr 20px;min-height:0;background:#f0f0f0}
main{background:#7c7c7c;padding:4px 4px 4px 3px;display:flex;flex-direction:column;gap:3px;min-height:0;min-width:0}
.row{display:grid;gap:0}.r1{grid-template-columns:1fr 311px 123px 154px;height:61px}
.r2{grid-template-columns:1fr 84px;gap:1px;height:223px}.r3{grid-template-columns:383px 1fr;gap:3px;flex:1;min-height:0}
.params{display:flex;flex-direction:column;justify-content:center;gap:2px;padding-left:8px}
.side{display:flex;flex-direction:column;gap:1px}.side hc-panel{height:105px}.side hc-check{margin:4px 20px 0 4px;background:#f0f0f0;padding:1px 0}
.vs{display:flex;justify-content:center;padding:18px 0 44px;border-left:1px solid #999}.vs::after{content:"";width:2px;background:#888}
.hs{display:flex;align-items:center;padding:0 57px 0 19px}.hs::after{content:"";height:2px;flex:1;background:#888}`,
`<title-bar></title-bar><menu-bar></menu-bar><tool-bar></tool-bar>
<div class="ws"><main>
<div class="row r1"><hc-panel heading="View"><view-info></view-info></hc-panel><hc-panel heading="Sensor"><device-info name="Simulated sensor" mode="Adaptive"></device-info></hc-panel><hc-panel heading="Generator"><device-info name="Raspberry Pi"></device-info></hc-panel><hc-panel heading="Parameters"><div class="params"><hc-check label="Reference"></hc-check><hc-check label="XYZ Adjustment" disabled></hc-check></div></hc-panel></div>
<div class="row r2"><hc-panel slim heading="Pantone skin tones ( Average dE: 9.30 [2.34,1.21,8.59] max: 19.08 [CIE2000] )"><checker-grid></checker-grid></hc-panel><div class="side"><hc-panel heading="Display"><display-modes></display-modes></hc-panel><side-button label="Go"></side-button><side-button label="Delete"></side-button><side-button label="Refs"></side-button><hc-check label="Edit"></hc-check></div></div>
<div class="row r3"><hc-panel heading="Selected color"><selected-color></selected-color></hc-panel><hc-panel heading="Information"><info-view></info-view></hc-panel></div>
</main><div class="vs"></div><div class="hs"></div></div>
<tab-strip></tab-strip><status-bar></status-bar>`);
</script>
</body>
</html>
